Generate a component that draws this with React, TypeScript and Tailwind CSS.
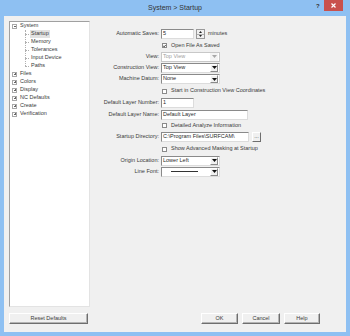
import React from 'react';

const font = { fontFamily: '"Liberation Sans", Arial, sans-serif' };

function ExpandBox({ open }: { open: boolean }) {
  return (
    <div className="relative w-[5px] h-[5px] border border-[#a8a8a8] bg-white shrink-0">
      <div className="absolute left-[0.5px] right-[0.5px] top-[1.5px] h-px bg-[#666]" />
      {!open && <div className="absolute top-[0.5px] bottom-[0.5px] left-[1.5px] w-px bg-[#666]" />}
    </div>
  );
}

function TreePanel() {
  const children = ['Startup', 'Memory', 'Tolerances', 'Input Device', 'Paths'];
  const roots = ['Files', 'Colors', 'Display', 'NC Defaults', 'Create', 'Verification'];
  return (
    <div className="w-[81px] h-[286px] bg-white border border-t-[#a0a0a0] border-l-[#a0a0a0] border-r-[#e3e3e3] border-b-[#e3e3e3] text-[5.5px] text-[#3a3a3a] leading-none">
      <div className="flex items-center h-[8px] pl-[2px] gap-[3px]">
        <ExpandBox open />
        <span>System</span>
      </div>
      <div className="relative">
        <div className="absolute left-[15px] top-0 bottom-[4px] border-l border-dotted border-[#b0b0b0]" />
        {children.map((c) => (
          <div key={c} className="flex items-center h-[8px] pl-[15px]">
            <div className="w-[4px] border-t border-dotted border-[#b0b0b0]" />
            <span className={c === 'Startup' ? 'ml-[1px] px-[1px] py-[1px] bg-[#e2e2e2]' : 'ml-[2px]'}>{c}</span>
          </div>
        ))}
      </div>
      {roots.map((r) => (
        <div key={r} className="flex items-center h-[8px] pl-[2px] gap-[3px]">
          <ExpandBox open={false} />
          <span>{r}</span>
        </div>
      ))}
    </div>
  );
}

function Arrow({ disabled }: { disabled?: boolean }) {
  return (
    <svg width="5" height="3" viewBox="0 0 5 3">
      <path d="M0 0 L5 0 L2.5 3 Z" fill={disabled ? '#a8a8a8' : '#111'} />
    </svg>
  );
}

function Combo({ value, disabled, line }: { value?: string; disabled?: boolean; line?: boolean }) {
  return (
    <div className={`flex items-center w-[59px] h-[10px] bg-white border ${disabled ? 'border-[#c8c8c8]' : 'border-t-[#8a8a8a] border-l-[#8a8a8a] border-r-[#dcdcdc] border-b-[#dcdcdc]'}`}>
      <div className={`flex-1 flex items-center pl-[1px] h-full ${disabled ? 'text-[#a0a0a0]' : 'text-[#2a2a2a]'}`}>
        {line ? <div className="ml-[8px] w-[27px] h-px bg-[#333]" /> : value}
      </div>
      <div className={`w-[8px] h-[8px] mr-px flex items-center justify-center ${disabled ? 'bg-[#f4f4f4]' : 'bg-[#f0f0f0] border-r border-b border-[#8a8a8a] border-t-white border-l-white border-t border-l'}`}>
        <Arrow disabled={disabled} />
      </div>
    </div>
  );
}

function TextBox({ value, w }: { value: string; w: string }) {
  return (
    <div className={`${w} h-[10px] bg-white border border-t-[#8a8a8a] border-l-[#8a8a8a] border-r-[#dcdcdc] border-b-[#dcdcdc] flex items-center pl-[1px] text-[#2a2a2a]`}>
      {value}
    </div>
  );
}

function Check({ checked, label }: { checked?: boolean; label: string }) {
  return (
    <div className="flex items-center">
      <div className="w-[5px] h-[5px] ml-[1px] bg-white border border-[#8a8a8a] flex items-center justify-center">
        {checked && (
          <svg width="4" height="4" viewBox="0 0 4 4">
            <path d="M0.3 2 L1.5 3.2 L3.7 0.6" stroke="#111" strokeWidth="1" fill="none" />
          </svg>
        )}
      </div>
      <span className="ml-[4px] text-[#3a3a3a]">{label}</span>
    </div>
  );
}

function Row({ label, h, children }: { label?: string; h: string; children: React.ReactNode }) {
  return (
    <div className={`flex items-center ${h}`}>
      <div className="w-[69px] text-right text-[#3a3a3a] whitespace-nowrap">{label}</div>
      <div className="ml-[2px] flex items-center">{children}</div>
    </div>
  );
}

function Button({ label, w }: { label: string; w: string }) {
  return (
    <div className={`${w} h-[11px] flex items-center justify-center bg-[#f0f0f0] border border-t-white border-l-white border-r-[#6e6e6e] border-b-[#6e6e6e] shadow-[inset_-1px_-1px_0_#b4b4b4] text-[5.5px] text-[#3a3a3a]`}>
      {label}
    </div>
  );
}

export default function App() {
  return (
    <div className="w-[350px] h-[336px] bg-[#8ec0f2] flex flex-col overflow-hidden" style={font}>
      {/* Title bar */}
      <div className="relative h-[16px] shrink-0 flex items-center justify-center">
        <span className="text-[7px] text-[#333]">System &gt; Startup</span>
        <span className="absolute left-[316px] top-[2px] text-[6px] font-bold text-[#333]">?</span>
        <div className="absolute left-[324px] top-0 w-[19px] h-[11px] bg-[#c9514d] flex items-center justify-center">
          <svg width="5" height="5" viewBox="0 0 5 5">
            <path d="M0.5 0.5 L4.5 4.5 M4.5 0.5 L0.5 4.5" stroke="#fff" strokeWidth="1.2" />
          </svg>
        </div>
      </div>

      {/* Client area */}
      <div className="flex-1 mx-[4px] mb-[4px] bg-[#f0f0f0] flex flex-col pl-[5px] pt-[5px] pr-[26px]">
        <div className="flex">
          <TreePanel />
          <div className="flex-1 pt-[7px] text-[5.5px] leading-none">
            <Row label="Automatic Saves:" h="h-[12px]">
              <TextBox value="5" w="w-[33px]" />
              <div className="ml-[2px] w-[9px] h-[10px] flex flex-col border border-[#9a9a9a] bg-[#f0f0f0]">
                <div className="flex-1 flex items-center justify-center border-b border-[#b0b0b0]">
                  <svg width="3" height="2" viewBox="0 0 3 2"><path d="M0 2 L3 2 L1.5 0 Z" fill="#222" /></svg>
                </div>
                <div className="flex-1 flex items-center justify-center">
                  <svg width="3" height="2" viewBox="0 0 3 2"><path d="M0 0 L3 0 L1.5 2 Z" fill="#222" /></svg>
                </div>
              </div>
              <span className="ml-[3px] text-[#3a3a3a]">minutes</span>
            </Row>
            <Row h="h-[11px]">
              <Check checked label="Open File As Saved" />
            </Row>
            <Row label="View:" h="h-[11px]">
              <Combo value="Top View" disabled />
            </Row>
            <Row label="Construction View:" h="h-[11px]">
              <Combo value="Top View" />
            </Row>
            <Row label="Machine Datum:" h="h-[12px]">
              <Combo value="None" />
            </Row>
            <Row h="h-[12px]">
              <Check label="Start in Construction View Coordinates" />
            </Row>
            <Row label="Default Layer Number:" h="h-[12px]">
              <TextBox value="1" w="w-[33px]" />
            </Row>
            <Row label="Default Layer Name:" h="h-[11px]">
              <TextBox value="Default Layer" w="w-[87px]" />
            </Row>
            <Row h="h-[11px]">
              <Check label="Detailed Analyze Information" />
            </Row>
            <Row label="Startup Directory:" h="h-[12px]">
              <TextBox value="C:\Program Files\SURFCAM\" w="w-[88px]" />
              <div className="ml-[3px] w-[9px] h-[10px] flex items-end justify-center pb-[2px] bg-[#f0f0f0] border border-t-white border-l-white border-r-[#6e6e6e] border-b-[#6e6e6e] text-[#3a3a3a]">
                ...
              </div>
            </Row>
            <Row h="h-[12px]">
              <Check label="Show Advanced Masking at Startup" />
            </Row>
            <Row label="Origin Location:" h="h-[11px]">
              <Combo value="Lower Left" />
            </Row>
            <Row label="Line Font:" h="h-[11px]">
              <Combo line />
            </Row>
          </div>
        </div>
        <div className="flex mt-[6px]">
          <Button label="Reset Defaults" w="w-[81px]" />
          <div className="ml-[113px] flex gap-[4px]">
            <Button label="OK" w="w-[37px]" />
            <Button label="Cancel" w="w-[38px]" />
            <Button label="Help" w="w-[36px]" />
          </div>
        </div>
      </div>
    </div>
  );
}
